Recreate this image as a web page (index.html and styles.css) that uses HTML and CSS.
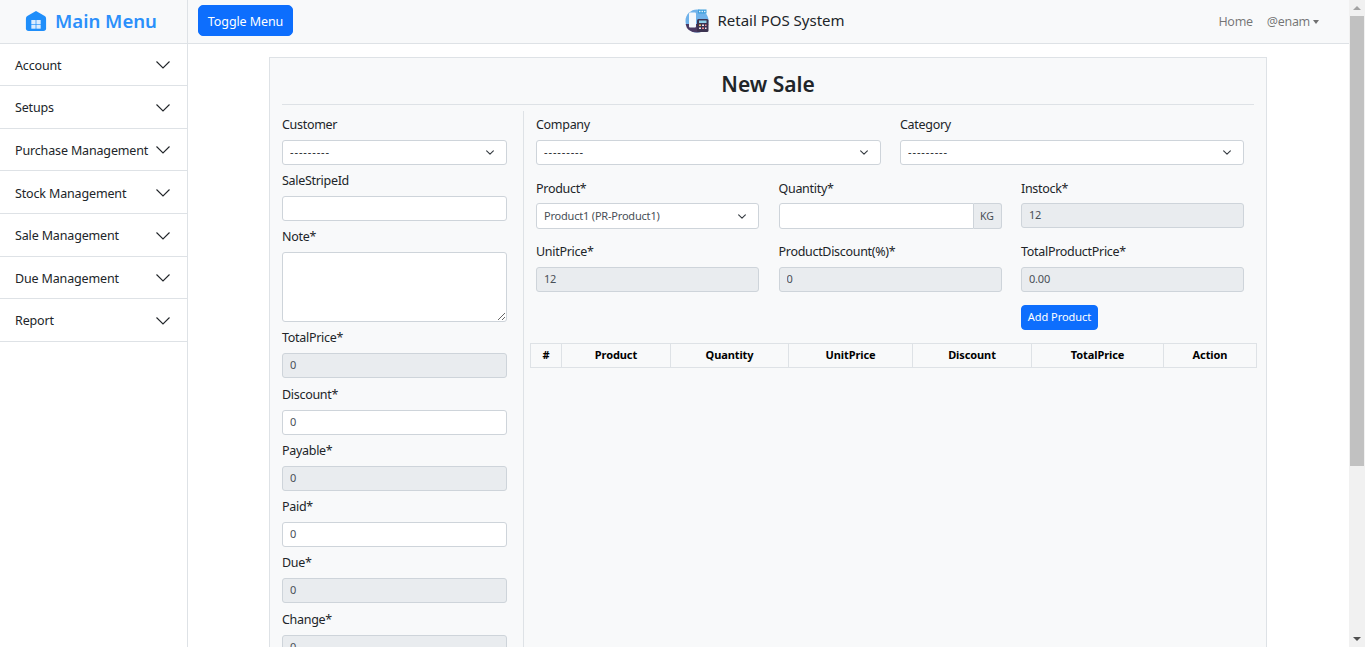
FILE: index.html
```html
<!DOCTYPE html>
<html lang="en">
<head>
  <meta charset="UTF-8">
  <meta name="viewport" content="width=device-width, initial-scale=1.0">
  <title>Retail POS System</title>
  <link rel="stylesheet" href="styles.css">
</head>
<body>
  <div class="page">
    <aside class="sidebar">
      <div class="sidebar-head">
        <svg class="brand-icon" viewBox="0 0 24 24" width="22" height="22">
          <path fill="#1f8efa" d="M12 1 L21.5 6.5 Q23 7.4 23 9.5 V20 Q23 23 20 23 H4 Q1 23 1 20 V9.5 Q1 7.4 2.5 6.5 Z"/>
          <rect fill="#dcecfe" x="6.9" y="10.9" width="4.7" height="4.4"/>
          <rect fill="#dcecfe" x="12.4" y="10.9" width="4.7" height="4.4"/>
          <rect fill="#dcecfe" x="6.9" y="16" width="4.7" height="4.4"/>
          <rect fill="#dcecfe" x="12.4" y="16" width="4.7" height="4.4"/>
        </svg>
        <span class="brand">Main Menu</span>
      </div>
      <ul class="menu">
        <li><span>Account</span><svg class="chev" viewBox="0 0 14 8" width="14" height="8"><path d="M0.5 0.5 L7 7 L13.5 0.5"/></svg></li>
        <li><span>Setups</span><svg class="chev" viewBox="0 0 14 8" width="14" height="8"><path d="M0.5 0.5 L7 7 L13.5 0.5"/></svg></li>
        <li><span>Purchase Management</span><svg class="chev" viewBox="0 0 14 8" width="14" height="8"><path d="M0.5 0.5 L7 7 L13.5 0.5"/></svg></li>
        <li><span>Stock Management</span><svg class="chev" viewBox="0 0 14 8" width="14" height="8"><path d="M0.5 0.5 L7 7 L13.5 0.5"/></svg></li>
        <li><span>Sale Management</span><svg class="chev" viewBox="0 0 14 8" width="14" height="8"><path d="M0.5 0.5 L7 7 L13.5 0.5"/></svg></li>
        <li><span>Due Management</span><svg class="chev" viewBox="0 0 14 8" width="14" height="8"><path d="M0.5 0.5 L7 7 L13.5 0.5"/></svg></li>
        <li><span>Report</span><svg class="chev" viewBox="0 0 14 8" width="14" height="8"><path d="M0.5 0.5 L7 7 L13.5 0.5"/></svg></li>
      </ul>
    </aside>

    <div class="content">
      <nav class="navbar">
        <button class="btn toggle">Toggle Menu</button>
        <div class="nav-title">
          <svg viewBox="0 0 24 24" width="24" height="24">
            <circle cx="12" cy="12" r="11.5" fill="#6fb2ea"/>
            <path fill="#4a3a63" d="M0.6 15 H23.4 Q22 23.5 12 23.5 Q2 23.5 0.6 15 Z"/>
            <rect x="4" y="3.5" width="7" height="15" rx="1" fill="#f4f8fc"/>
            <rect x="12" y="10" width="11.5" height="13" rx="1.5" fill="#3c3350"/>
            <rect x="14" y="11.5" width="7.5" height="2.5" fill="#8fd0e8"/>
            <rect x="14" y="15.5" width="2" height="1.5" fill="#f0c36a"/>
            <rect x="17" y="15.5" width="2" height="1.5" fill="#e9e4f2"/>
            <rect x="20" y="15.5" width="1.5" height="1.5" fill="#e88"/>
            <rect x="14" y="18.5" width="2" height="1.5" fill="#e9e4f2"/>
            <rect x="17" y="18.5" width="2" height="1.5" fill="#e88"/>
            <rect x="20" y="18.5" width="1.5" height="1.5" fill="#e9e4f2"/>
            <rect x="13" y="0.5" width="8.5" height="4" fill="#3f9fdc"/>
            <rect x="14" y="1.8" width="1.5" height="1.4" fill="#dff1fb"/>
            <rect x="16.5" y="1.8" width="1.5" height="1.4" fill="#dff1fb"/>
            <rect x="19" y="1.8" width="1.5" height="1.4" fill="#dff1fb"/>
          </svg>
          <span>Retail POS System</span>
        </div>
        <div class="nav-links">
          <a>Home</a>
          <a class="dropdown">@enam</a>
        </div>
      </nav>

      <main class="main">
        <section class="card">
          <h1 class="card-title">New Sale</h1>
          <div class="sale-form">
            <div class="left-col">
              <div class="field"><label>Customer</label><select class="blank"><option>---------</option></select></div>
              <div class="field"><label>SaleStripeId</label><input type="text"></div>
              <div class="field"><label>Note*</label><textarea></textarea></div>
              <div class="field"><label>TotalPrice*</label><input type="text" value="0" readonly class="off"></div>
              <div class="field"><label>Discount*</label><input type="text" value="0"></div>
              <div class="field"><label>Payable*</label><input type="text" value="0" readonly class="off"></div>
              <div class="field"><label>Paid*</label><input type="text" value="0"></div>
              <div class="field"><label>Due*</label><input type="text" value="0" readonly class="off"></div>
              <div class="field"><label>Change*</label><input type="text" value="0" readonly class="off"></div>
            </div>

            <div class="right-col">
              <div class="row-two">
                <div class="field"><label>Company</label><select class="blank"><option>---------</option></select></div>
                <div class="field"><label>Category</label><select class="blank"><option>---------</option></select></div>
              </div>
              <div class="row-three">
                <div class="field"><label>Product*</label><select class="tall"><option>Product1 (PR-Product1)</option></select></div>
                <div class="field">
                  <label>Quantity*</label>
                  <div class="input-group"><input type="text" class="tall"><span class="unit">KG</span></div>
                </div>
                <div class="field"><label>Instock*</label><input type="text" value="12" readonly class="off"></div>
                <div class="field lower"><label>UnitPrice*</label><input type="text" value="12" readonly class="off"></div>
                <div class="field lower"><label>ProductDiscount(%)*</label><input type="text" value="0" readonly class="off"></div>
                <div class="field lower"><label>TotalProductPrice*</label><input type="text" value="0.00" readonly class="off"></div>
                <button class="btn add">Add Product</button>
              </div>
              <table class="items">
                <thead>
                  <tr>
                    <th class="c-no">#</th>
                    <th class="c-product">Product</th>
                    <th class="c-qty">Quantity</th>
                    <th class="c-unit">UnitPrice</th>
                    <th class="c-disc">Discount</th>
                    <th class="c-total">TotalPrice</th>
                    <th>Action</th>
                  </tr>
                </thead>
              </table>
            </div>
          </div>
        </section>
      </main>
    </div>

    <div class="scrollbar">
      <span class="arrow up"></span>
      <div class="track"><div class="thumb"></div></div>
      <span class="arrow down"></span>
    </div>
  </div>
</body>
</html>
```

FILE: styles.css
```css
* {
  box-sizing: border-box;
}

html, body {
  height: 100%;
  margin: 0;
  padding: 0;
}

body {
  font-family: "Noto Sans", "Open Sans", sans-serif;
  font-size: 12.5px;
  color: #212529;
  background: #fff;
  overflow: hidden;
}

.page {
  display: flex;
  height: 647px;
  overflow: hidden;
}

/* sidebar */
.sidebar {
  width: 188px;
  flex: none;
  border-right: 1px solid #dee2e6;
}

.sidebar-head {
  height: 44px;
  background: #f8f9fa;
  border-bottom: 1px solid #dee2e6;
  display: flex;
  align-items: center;
  justify-content: center;
  gap: 8px;
  padding: 0 5px 2px 0;
}

.brand {
  font-size: 18.6px;
  font-weight: 600;
  color: #2a8ffb;
}

.menu {
  list-style: none;
  margin: -0.67px 0 0;
  padding: 0;
}

.menu li {
  height: 42.66px;
  padding: 1.74px 17px 0 15px;
  letter-spacing: -0.15px;
  border-bottom: 1px solid #dee2e6;
  display: flex;
  align-items: center;
  justify-content: space-between;
}

.chev {
  fill: none;
  stroke: #212529;
  stroke-width: 1.1;
}

/* top bar */
.content {
  flex: 1;
  min-width: 0;
}

.navbar {
  height: 44px;
  background: #f8f9fa;
  border-bottom: 1px solid #dee2e6;
  padding: 0 30px 2px 10px;
  display: grid;
  grid-template-columns: 1fr auto 1fr;
  align-items: center;
}

.btn {
  font-family: inherit;
  color: #fff;
  background: #0d6efd;
  border: 1px solid #0d6efd;
  border-radius: 4px;
  cursor: pointer;
}

.toggle {
  justify-self: start;
  width: 95px;
  height: 31px;
  padding: 1px 0 0;
  font-size: 12.5px;
  letter-spacing: -0.1px;
  border-radius: 5px;
}

.nav-title {
  display: flex;
  align-items: center;
  gap: 8px;
  font-size: 15px;
  margin-left: 13px;
}

.nav-title span {
  margin-bottom: 2px;
}

.nav-links {
  justify-self: end;
  display: flex;
  gap: 14px;
  padding-top: 2px;
  letter-spacing: -0.3px;
  color: rgba(0, 0, 0, 0.55);
}

.dropdown::after {
  content: "";
  display: inline-block;
  margin-left: 3px;
  vertical-align: 2px;
  border-top: 4px solid;
  border-left: 3.5px solid transparent;
  border-right: 3.5px solid transparent;
}

/* card */
.main {
  padding: 13px 82px 0 81px;
}

.card {
  background: #f8f9fa;
  border: 1px solid #dee2e6;
  padding: 0 12px;
  height: 900px;
}

.card-title {
  margin: 0;
  height: 47px;
  line-height: 53px;
  text-align: center;
  font-size: 21px;
  font-weight: 600;
  border-bottom: 1px solid #dee2e6;
}

.sale-form {
  display: flex;
  margin-top: 6px;
}

.left-col {
  width: 242px;
  flex: none;
  padding: 5.8px 16px 0 0;
  border-right: 1px solid #dee2e6;
}

.right-col {
  flex: 1;
  min-width: 0;
  padding: 6px 0 0 6px;
  margin-right: -3px;
}

.field {
  display: flex;
  flex-direction: column;
}

.left-col .field {
  margin-bottom: 8.33px;
}

.field label {
  height: 23px;
  line-height: 15px;
  letter-spacing: -0.3px;
}

.left-col .field label {
  line-height: 16px;
}

/* inputs */
input, select, textarea {
  display: block;
  width: 100%;
  height: 25px;
  padding: 0 7px 2px;
  font-family: inherit;
  font-size: 11px;
  letter-spacing: -0.2px;
  color: #495057;
  background-color: #fff;
  border: 1px solid #ced4da;
  border-radius: 3px;
  outline: none;
}

textarea {
  height: 69.4px;
  resize: vertical;
}

select {
  appearance: none;
  background-image: url("data:image/svg+xml,%3csvg xmlns='http://www.w3.org/2000/svg' viewBox='0 0 16 16'%3e%3cpath fill='none' stroke='%23343a40' stroke-linecap='round' stroke-linejoin='round' stroke-width='2' d='M2 5l6 6 6-6'/%3e%3c/svg%3e");
  background-repeat: no-repeat;
  background-position: right 10px center;
  background-size: 12px 9px;
}

select.blank {
  letter-spacing: 0.9px;
  color: #212529;
}

input.off {
  background-color: #e9ecef;
}

.tall {
  height: 26px;
}

.row-two {
  display: grid;
  grid-template-columns: 345px 344px;
  column-gap: 19px;
  padding-left: 6px;
  margin-bottom: 15.5px;
}

.row-three {
  display: grid;
  grid-template-columns: repeat(3, 223px);
  column-gap: 19.5px;
  row-gap: 15.5px;
  padding-left: 6px;
}

.row-three label {
  height: 22.5px;
}

.row-three .lower label {
  height: 23.5px;
  margin-top: -1px;
}

.input-group {
  display: flex;
}

.input-group input {
  flex: 1;
  min-width: 0;
  border-radius: 3px 0 0 3px;
}

.unit {
  width: 28px;
  flex: none;
  display: flex;
  align-items: center;
  justify-content: center;
  font-size: 10.5px;
  color: #495057;
  background: #e9ecef;
  border: 1px solid #ced4da;
  border-left: none;
  border-radius: 0 3px 3px 0;
}

.add {
  grid-column: 3;
  justify-self: start;
  width: 77px;
  height: 25px;
  margin-top: -2.5px;
  padding: 0 0 2px;
  font-size: 11px;
  letter-spacing: -0.05px;
}

/* table */
.items {
  width: 727px;
  margin-top: 13px;
  border-collapse: collapse;
  table-layout: fixed;
}

.items th {
  height: 24px;
  padding: 0 0 2px;
  font-size: 11px;
  font-weight: 700;
  letter-spacing: -0.1px;
  color: #000;
  text-align: center;
  border: 1px solid #dee2e6;
}

.c-no { width: 31px; }
.c-product { width: 109px; }
.c-qty { width: 118px; }
.c-unit { width: 124px; }
.c-disc { width: 119px; }
.c-total { width: 132px; }

/* window scrollbar */
.scrollbar {
  width: 16px;
  flex: none;
  background: #f1f1f1;
  display: flex;
  flex-direction: column;
  align-items: center;
}

.arrow {
  height: 16px;
  flex: none;
  display: flex;
  align-items: center;
}

.arrow::before {
  content: "";
  border-left: 4px solid transparent;
  border-right: 4px solid transparent;
}

.arrow.up::before {
  border-bottom: 4px solid #a3a3a3;
}

.arrow.down::before {
  border-top: 4px solid #505050;
}

.track {
  flex: 1;
  width: 100%;
  padding: 0 1px;
}

.thumb {
  height: 450px;
  background: #c1c1c1;
}
```
